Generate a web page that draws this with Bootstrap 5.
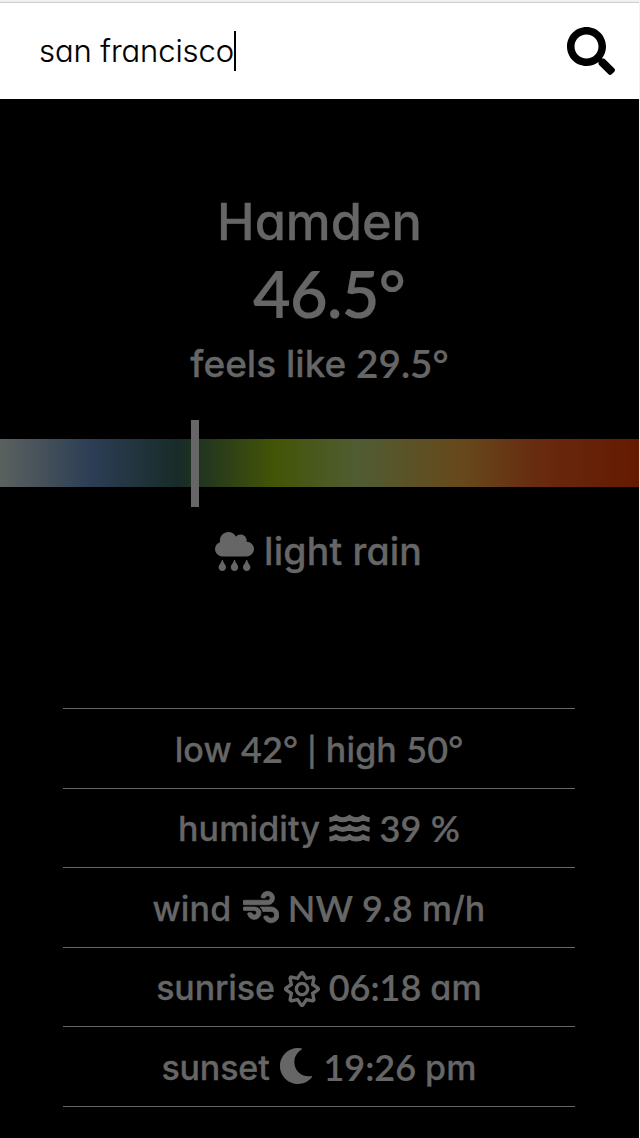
<!DOCTYPE html>
<html lang="en">
<head>
<meta charset="utf-8">
<meta name="viewport" content="width=device-width, initial-scale=1">
<title>Weather</title>
<link href="https://cdn.jsdelivr.net/npm/bootstrap@5.3.0/dist/css/bootstrap.min.css" rel="stylesheet">
<style>
body{background:#000;color:#666;font-family:Inter,"Liberation Sans",sans-serif;font-feature-settings:"cv11";font-weight:500;width:639px;height:1138px;overflow:hidden}
html{background:#f3f3f3}
svg{fill:currentColor;display:block;flex:none}
.search-bar{height:99px;background:#fff;color:#000;border-top:2px solid #f0f0f0;box-shadow:inset 0 1px #ccc;padding:0 24px 0 39px}
.query{font-size:31px;font-weight:300;letter-spacing:-.08px;line-height:40px;padding-top:1px;-webkit-text-stroke:.15px #000}
.caret{width:2px;height:40px;background:#000}
.line{white-space:pre;line-height:1;-webkit-text-stroke:.3px #666}
.num{font-family:Lato,"Liberation Sans",sans-serif;font-weight:600;-webkit-text-stroke:.2px #666}
.city{font-size:50.5px;height:76px;margin-top:85px}
.temp{font-size:65px;height:67px;padding-left:19px;letter-spacing:-.7px}
.feels{font-size:37px;height:73px}
.feels .num{font-size:38.7px}
.scale{height:48px;margin-top:39px;background:linear-gradient(90deg,#5b615f,#2b3d54 14.6%,#182b27 28%,#435506 43%,#505c33 56%,#66491b 72%,#682a10 84.5%,#641a00)}
.marker{width:8px;height:87px;left:191px;top:-19px;background:#666}
.sky{font-size:37.5px;height:129px;padding-right:2px;letter-spacing:.15px}
.facts{width:512px;margin:92px 0 0 63px;border-top:1px solid #666}
.facts>div{height:79.55px;font-size:34px;border-bottom:1px solid #666}
.facts span{letter-spacing:.15px;padding-top:3px}
.facts .num{font-size:36px;letter-spacing:.15px;padding-top:1px}
.facts .sun span:first-child{letter-spacing:-.15px}
.facts .sun .num{letter-spacing:0}
</style>
</head>
<body>
<header class="search-bar d-flex align-items-center justify-content-between">
<div class="d-flex align-items-center"><span class="query">san francisco</span><span class="caret"></span></div>
<svg width="48" height="48" viewBox="0 0 512 512"><path d="M505 442.700L405.300 343c-4.500-4.500-10.600-7-17-7H372c27.600-35.300 44-79.700 44-128C416 93.100 322.900 0 208 0S0 93.100 0 208s93.100 208 208 208c48.300 0 92.700-16.400 128-44v16.300c0 6.400 2.500 12.500 7 17l99.700 99.700c9.400 9.400 24.600 9.400 33.900 0l28.300-28.300c9.400-9.400 9.400-24.600.1-34zM208 336c-70.700 0-128-57.200-128-128 0-70.700 57.200-128 128-128 70.700 0 128 57.200 128 128 0 70.700-57.200 128-128 128z"/></svg>
</header>
<main>
<div class="line city d-flex align-items-center justify-content-center"><span>Hamden</span></div>
<div class="line temp d-flex align-items-center justify-content-center"><span class="num">46.5°</span></div>
<div class="line feels d-flex align-items-center justify-content-center"><span>feels like </span><span class="num">29.5°</span></div>
<div class="scale position-relative"><div class="marker position-absolute"></div></div>
<div class="line sky d-flex align-items-center justify-content-center"><svg width="39" height="39" viewBox="0 0 512 512"><path d="M416 128c-.6 0-1.100.2-1.600.2 1.100-5.200 1.600-10.600 1.600-16.200 0-44.200-35.800-80-80-80-24.600 0-46.300 11.300-61 28.800C256.400 24.800 219.300 0 176 0 114.100 0 64 50.100 64 112c0 7.300.8 14.300 2.100 21.200C27.800 145.800 0 181.500 0 224c0 53 43 96 96 96h320c53 0 96-43 96-96s-43-96-96-96z"/><path id="drop" d="M88 374.200c-12.800 44.400-40 56.400-40 87.700 0 27.700 21.500 50.100 48 50.100s48-22.400 48-50.100c0-31.400-27.200-43.100-40-87.700-2.200-8.100-13.500-8.500-16 0z"/><use href="#drop" x="160"/><use href="#drop" x="320"/></svg><span> light rain</span></div>
<section class="facts">
<div class="line d-flex align-items-center justify-content-center"><span>low </span><span class="num">42° | </span><span>high </span><span class="num">50°</span></div>
<div class="line d-flex align-items-center justify-content-center"><span>humidity </span><svg width="41" height="36" viewBox="0 0 41 36" fill="none" stroke="currentColor" stroke-width="5" style="fill:none"><path id="wave" d="M.4 9.700Q4 9.400 7 7.500Q10 9.700 13.700 9.700Q17.500 9.700 20.500 7.500Q23.500 9.700 27.300 9.700Q31 9.700 34 7.500Q37 9.400 40.600 9.700"/><use href="#wave" y="9.700"/><use href="#wave" y="19.400"/></svg><span class="num"> 39 %</span></div>
<div class="line d-flex align-items-center justify-content-center"><span>wind </span><svg style="margin-left:2px" width="36" height="36" viewBox="0 0 512 512"><path d="M156.700 256H16c-8.800 0-16 7.200-16 16v16c0 8.800 7.200 16 16 16h142.200c15.900 0 30.800 10.900 33.400 26.600 3.300 20-12.100 37.400-31.600 37.400-14.100 0-26.100-9.200-30.400-21.900-2.100-6.300-8.600-10.100-15.200-10.100H81.600c-9.800 0-17.700 8.800-15.900 18.400 8.600 44.100 47.600 77.600 94.200 77.600 57.100 0 102.700-50.100 95.200-108.600C249 284 205.400 256 156.700 256zM16 224h336c59.700 0 106.800-54.800 93.800-116.700-7.600-36.200-36.900-65.500-73.100-73.100-55.400-11.600-105.100 24.900-114.400 75.500-1.800 9.600 6.200 18.300 15.900 18.300h32.800c6.700 0 13.100-3.800 15.200-10.100C326.400 105.200 338.400 96 352.500 96c19.500 0 34.900 17.400 31.600 37.400-2.600 15.700-17.400 26.600-33.400 26.600H16c-8.800 0-16 7.200-16 16v32c0 8.800 7.200 16 16 16zm384 32H243.700c19.300 16.600 33.200 38.800 39.800 64H400c26.500 0 48 21.500 48 48s-21.500 48-48 48c-17.900 0-33.300-9.900-41.600-24.400-2.900-5-8.700-7.600-14.500-7.600h-33.800c-10.900 0-19 10.800-15.300 21.100 17.800 50.600 70.500 84.800 129.400 72.300 41.200-8.700 75.100-41.600 84.700-82.700C526 321.500 470.500 256 400 256z" stroke="currentColor" stroke-width="10"/></svg><span class="num"> NW 9.8 </span><span>m/h</span></div>
<div class="line sun d-flex align-items-center justify-content-center"><span>sunrise </span><svg class="mt-1" width="36" height="36" viewBox="0 0 512 512"><path d="M494.200 221.900l-59.800-40.500 13.700-71c2.600-13.200-1.600-26.800-11.100-36.400-9.600-9.500-23.200-13.700-36.200-11.100l-70.900 13.700-40.400-59.900c-15.100-22.300-51.900-22.300-67 0l-40.400 59.900-70.800-13.700C98 60.400 84.500 64.500 75 74.100c-9.500 9.600-13.700 23.100-11.100 36.300l13.700 71-59.800 40.500C6.600 229.500 0 242 0 255.500s6.700 26 17.800 33.500l59.800 40.500-13.700 71c-2.600 13.200 1.600 26.800 11.100 36.300 9.500 9.500 22.900 13.700 36.300 11.100l70.800-13.700 40.400 59.900C230 505.300 242.600 512 256 512s26-6.700 33.500-17.800l40.400-59.900 70.900 13.700c13.400 2.700 26.800-1.600 36.300-11.100 9.500-9.500 13.600-23.100 11.100-36.300l-13.700-71 59.800-40.500c11.100-7.500 17.800-20.100 17.800-33.600-.1-13.600-6.700-26.100-17.900-33.700zm-112.900 85.600l17.600 91.200-91-17.600L256 458l-51.900-77-90.900 17.600 17.600-91.200-76.800-52 76.800-52-17.600-91.200 91 17.600L256 53l51.900 76.900 91-17.600-17.600 91.100 76.800 52-76.800 52.100zM256 152c-57.300 0-104 46.700-104 104s46.700 104 104 104 104-46.700 104-104-46.700-104-104-104zm0 160c-30.900 0-56-25.100-56-56s25.100-56 56-56 56 25.100 56 56-25.100 56-56 56z"/></svg><span class="num"> 06:18 </span><span>am</span></div>
<div class="line sun d-flex align-items-center justify-content-center"><span>sunset </span><svg width="36" height="36" viewBox="0 0 512 512"><path d="M283.200 512c79 0 151.100-35.900 198.900-94.800 7.100-8.700-.6-21.400-11.600-19.300-124.200 23.700-238.300-71.600-238.300-197 0-72.200 38.700-138.600 101.500-174.400 9.700-5.500 7.300-20.200-3.700-22.200A258.200 258.200 0 0 0 283.200 0c-141.300 0-256 114.500-256 256 0 141.300 114.500 256 256 256z"/></svg><span class="num"> 19:26 </span><span>pm</span></div>
</section>
</main>
<script src="https://cdn.jsdelivr.net/npm/bootstrap@5.3.0/dist/js/bootstrap.bundle.min.js"></script>
</body>
</html>
